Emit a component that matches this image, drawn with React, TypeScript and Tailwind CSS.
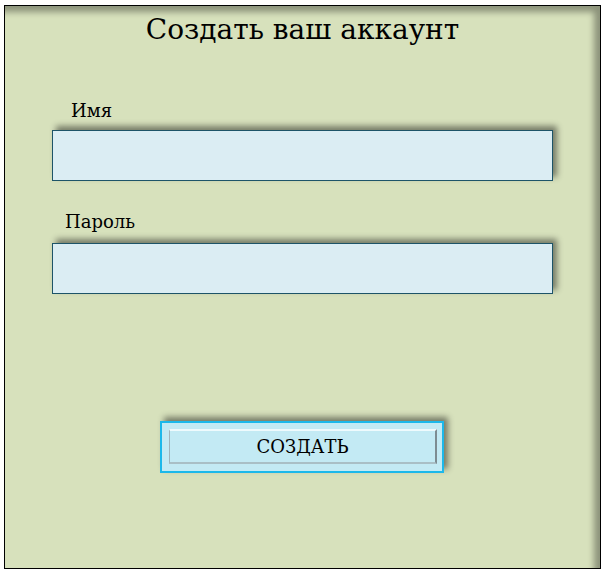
import React from "react";

export default function App() {
  const serif = { fontFamily: '"DejaVu Serif", serif' };
  return (
    <div className="w-[603px] h-[570px] bg-white pt-[5px] pl-[4px]" style={serif}>
      <div className="w-[597px] h-[564px] border border-black bg-[#d7e1bc] shadow-[inset_-6px_6px_6px_rgba(0,0,0,0.35)] flex flex-col">
        <h1 className="text-[28px] text-center mt-[7px] leading-[34px] text-black">Создать ваш аккаунт</h1>
        <div className="pl-[47px] mt-[53px] flex flex-col">
          <label className="text-[18px] leading-[22px] pl-[19px]">Имя</label>
          <div className="mt-[8px] w-[501px] h-[51px] border border-[#1d5468] bg-[#dbedf3] shadow-[4px_-4px_6px_rgba(0,0,0,0.45)]" />
          <label className="text-[18px] leading-[22px] pl-[13px] mt-[30px]">Пароль</label>
          <div className="mt-[10px] w-[501px] h-[51px] border border-[#1d5468] bg-[#dbedf3] shadow-[4px_-4px_6px_rgba(0,0,0,0.45)]" />
        </div>
        <div className="self-start ml-[155px] mt-[127px] w-[284px] h-[52px] border-2 border-[#1cb8ea] bg-[#c3eaf4] shadow-[4px_-4px_6px_rgba(0,0,0,0.45)] pt-[6px] pl-[7px]">
          <div className="w-[268px] h-[35px] border-t-2 border-l border-t-[#eefafd] border-l-[#9fb3bb] border-r-2 border-b-2 border-r-[#7d8c92] border-b-[#a9bfc6] flex items-center justify-center text-[18px] text-black">
            СОЗДАТЬ
          </div>
        </div>
      </div>
    </div>
  );
}
